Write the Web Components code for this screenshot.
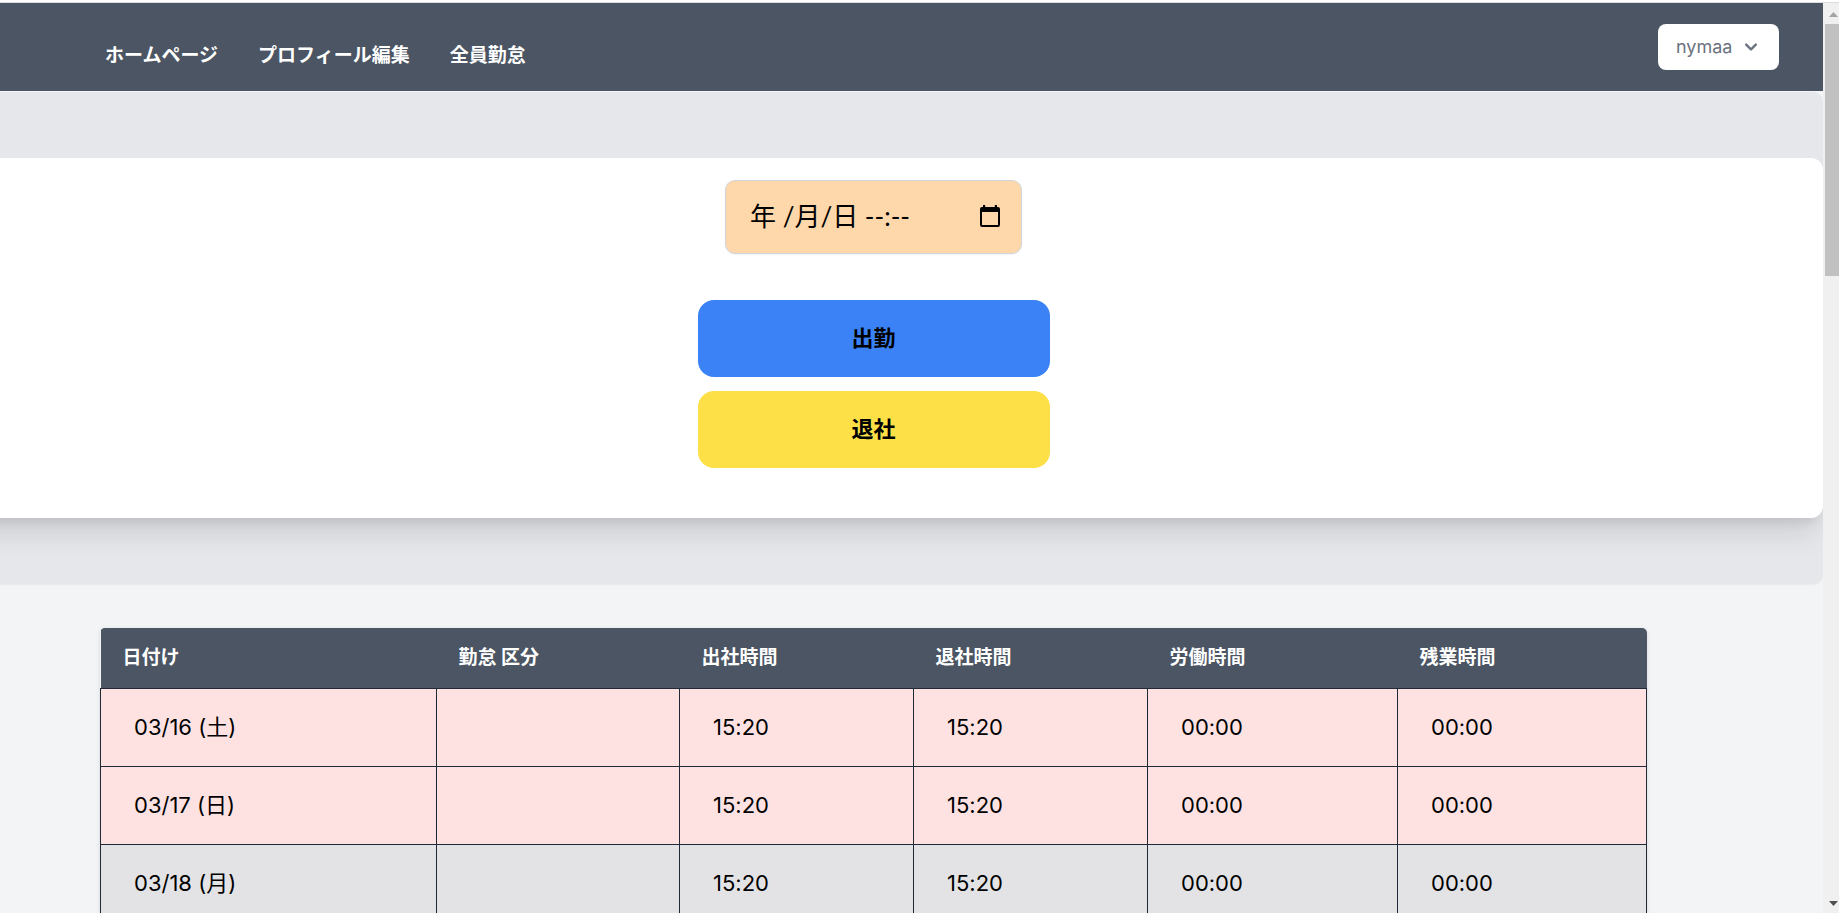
<!DOCTYPE html>
<html lang="ja">
<head>
<meta charset="utf-8">
<title>勤怠</title>
<style>
html, body { margin: 0; height: 100%; }
body {
  --slate: #4b5563;
  --line: #1f2937;
  overflow: hidden;
  background: #f3f4f6;
  color: #000;
  font-family: Inter, "Noto Sans CJK JP", sans-serif;
  font-size: 22px;
  font-feature-settings: "calt" 0;
}
</style>
</head>
<body>
<app-shell>
  <app-nav slot="nav">
    <nav-link href="#home">ホームページ</nav-link>
    <nav-link href="#profile">プロフィール編集</nav-link>
    <nav-link href="#all">全員勤怠</nav-link>
    <user-menu slot="user">nymaa</user-menu>
  </app-nav>
  <punch-panel>
    <date-field></date-field>
    <punch-button tone="in">出勤</punch-button>
    <punch-button tone="out">退社</punch-button>
  </punch-panel>
  <attendance-table></attendance-table>
</app-shell>

<script>
function define(name, html, setup) {
  const template = document.createElement('template');
  template.innerHTML = html;
  customElements.define(name, class extends HTMLElement {
    constructor() {
      super();
      this.attachShadow({ mode: 'open' }).append(template.content.cloneNode(true));
    }
    connectedCallback() { if (setup) setup(this, this.shadowRoot); }
  });
}

define('app-shell', `
<style>
:host { display: flex; flex-direction: column; height: 100vh; overflow: hidden; }
.edge { flex: none; height: 2px; background: #fff; border-bottom: 1px solid #dcdcdc; }
.view { flex: 1; min-height: 0; display: flex; }
main { flex: 1; min-width: 0; overflow: hidden; }
</style>
<div class="edge"></div>
<div class="view"><main><slot name="nav"></slot><slot></slot></main><side-scroll></side-scroll></div>`);

define('side-scroll', `
<style>
:host { flex: none; width: 16px; background: #f0f0f0; display: flex; flex-direction: column; align-items: flex-end; overflow: hidden; }
svg { display: block; flex: none; }
.thumb { width: 14px; height: 252px; background: #c1c1c1; }
.rest { flex: 1; }
</style>
<svg width="16" height="21"><path d="M6 14 L10.500 9 L15 14Z" fill="#a3a3a3"/></svg>
<div class="thumb"></div><div class="rest"></div>
<svg width="16" height="17"><path d="M6 5 H15 L10.500 10Z" fill="#505050"/></svg>`);

define('app-nav', `
<style>
:host { display: block; border-bottom: 1px solid #f3f4f6; }
nav { display: flex; justify-content: space-between; align-items: flex-start; height: 88px; padding: 0 44px 0 105px; background: var(--slate); }
.links { display: flex; gap: 40px; padding-top: 39px; }
.user { padding-top: 21px; }
</style>
<nav><div class="links"><slot></slot></div><div class="user"><slot name="user"></slot></div></nav>`);

define('nav-link', `
<style>
:host { display: block; }
a { display: block; color: #fff; font-size: 19px; line-height: 28px; font-weight: 700; text-decoration: none; white-space: nowrap; }
</style>
<a><slot></slot></a>`, (host, root) => { root.querySelector('a').href = host.getAttribute('href'); });

define('user-menu', `
<style>
:host { display: block; }
button { display: flex; align-items: center; gap: 7px; height: 46px; width: 121px; padding: 0 16px 0 18px; border: 0; border-radius: 8px; background: #fff; color: #6b7280; font: 400 18px/20px Inter, sans-serif; }
svg { flex: none; }
</style>
<button type="button" aria-haspopup="menu"><slot></slot>
<svg width="24" height="24" viewBox="0 0 20 20" fill="currentColor"><path fill-rule="evenodd" d="M5.293 7.293a1 1 0 011.414 0L10 10.586l3.293-3.293a1 1 0 111.414 1.414l-4 4a1 1 0 01-1.414 0l-4-4a1 1 0 010-1.414z"/></svg></button>`);

define('punch-panel', `
<style>
:host { display: block; margin-left: -76px; padding: 66px 0; background: #e5e7eb; border-radius: 10px; box-shadow: 0 1px 2px rgba(0,0,0,.05); }
form { display: flex; flex-direction: column; align-items: center; gap: 14px; padding: 22px 0 50px; background: #fff; border-radius: 12px; box-shadow: 0 22px 28px -6px rgba(0,0,0,.1), 0 9px 12px -6px rgba(0,0,0,.1); }
</style>
<form><slot></slot></form>`);

define('date-field', `
<style>
:host { display: block; margin-bottom: 32px; }
label { display: flex; align-items: center; box-sizing: border-box; width: 297px; height: 74px; padding: 0 21px 2px 24px; border: 1px solid #d1d5db; border-radius: 10px; background: #fed7aa; box-shadow: 0 1px 2px rgba(0,0,0,.05); }
input { flex: 1; min-width: 0; padding: 0; border: 0; background: none; color: #000; font: 400 26px/36px Lato, "Noto Sans CJK JP", sans-serif; outline: 0; }
button { padding: 0; border: 0; background: none; display: flex; }
</style>
<label><input type="text" value="年 /月/日 --:--" aria-label="日時">
<button type="button" aria-label="カレンダー"><svg width="20" height="22" viewBox="0 0 20 22"><path fill="#000" fill-rule="evenodd" d="M3 0h2.200v2h9.600V0H17v2h1a2 2 0 012 2v16a2 2 0 01-2 2H2a2 2 0 01-2-2V4a2 2 0 012-2h1zM2 7v13h16V7z"/></svg></button></label>`);

define('punch-button', `
<style>
:host { display: block; }
button { display: block; width: 352px; height: 77px; padding: 0 0 6px; border: 0; border-radius: 16px; background: #3b82f6; color: #000; font: 700 22px/32px "Noto Sans CJK JP", sans-serif; }
:host([tone="out"]) button { background: #fde047; }
</style>
<button type="button"><slot></slot></button>`);

define('attendance-table', `
<style>
:host { display: block; padding: 44px 176px 44px 100px; }
.card { border-radius: 5px 5px 0 0; overflow: hidden; box-shadow: 0 1px 4px rgba(0,0,0,.12); }
table { width: 100%; table-layout: fixed; border-collapse: collapse; }
th { height: 60px; box-sizing: border-box; padding: 0 22px; background: var(--slate); color: #fff; font-size: 19px; line-height: 28px; font-weight: 700; text-align: left; }
td { height: 78px; box-sizing: border-box; padding: 0 33px; border: 1px solid var(--line); background: #e3e3e5; line-height: 32px; }
.rest td { background: #fee2e2; }
</style>
<div class="card"><table>
<colgroup><col style="width:336px"><col style="width:243px"><col style="width:234px"><col style="width:234px"><col style="width:250px"><col style="width:249px"></colgroup>
<thead><tr><th>日付け</th><th>勤怠 区分</th><th>出社時間</th><th>退社時間</th><th>労働時間</th><th>残業時間</th></tr></thead>
<tbody></tbody></table></div>`, (host, root) => {
  const rows = [['03/16 (土)', true], ['03/17 (日)', true], ['03/18 (月)', false]];
  const body = root.querySelector('tbody');
  body.replaceChildren();
  for (const [day, rest] of rows) {
    const tr = body.insertRow();
    if (rest) tr.className = 'rest';
    for (const text of [day, '', '15:20', '15:20', '00:00', '00:00']) tr.insertCell().textContent = text;
  }
});
</script>
</body>
</html>
